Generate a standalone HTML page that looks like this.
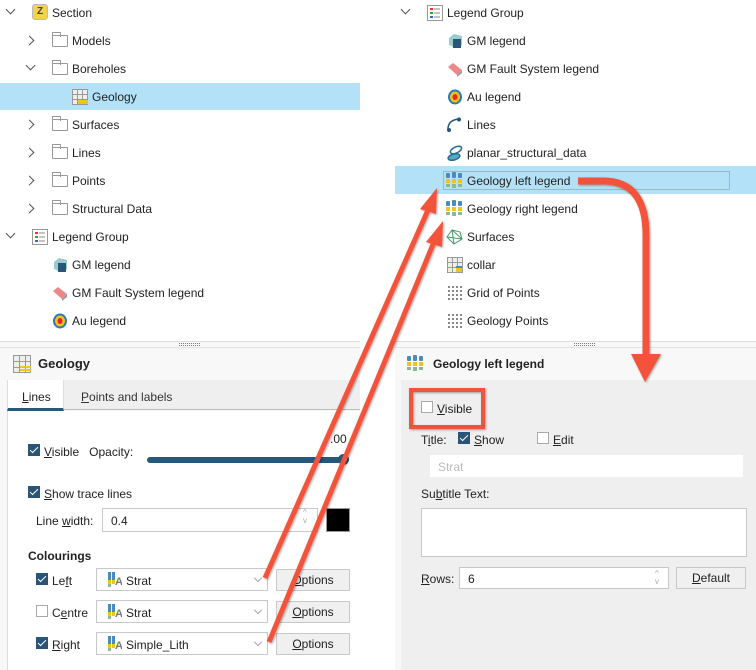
<!DOCTYPE html>
<html><head><meta charset="utf-8"><style>
*{margin:0;padding:0;box-sizing:border-box}
body{width:756px;height:670px;overflow:hidden;background:#fff;position:relative;font-family:"Liberation Sans",sans-serif;font-size:12px;color:#222}
.a{position:absolute}
.t{position:absolute;line-height:16px;white-space:nowrap;margin-top:1px}
.chev{position:absolute;width:7px;height:7px;border-right:1.3px solid #555;border-bottom:1.3px solid #555}
.cr{transform:rotate(-45deg)}
.cd{transform:rotate(45deg)}
.fold{position:absolute;width:16px;height:12px;border:1px solid #999;border-radius:1px;background:#fff}
.fold:before{content:"";position:absolute;left:-1px;top:-4px;width:7px;height:4px;border:1px solid #999;border-bottom:none;border-radius:1px 1px 0 0}
.cb{position:absolute;width:12px;height:12px;border:1px solid #aaa;background:#fff}
.cb.on{background:#2a5578;border-color:#2a5578}
.cb.on:after{content:"";position:absolute;left:3px;top:0px;width:3px;height:7px;border-right:1.5px solid #fff;border-bottom:1.5px solid #fff;transform:rotate(45deg)}
.inp{position:absolute;background:#fff;border:1px solid #c8c8c8}
.btn{position:absolute;background:#f0f0f0;border:1px solid #c8c8c8;text-align:center;line-height:20px}
u{text-decoration:underline}
</style></head><body>

<!-- LEFT TREE -->
<div class="a" style="left:0;top:83px;width:360px;height:27px;background:#b3e1f7"></div>
<div class="chev cd" style="left:7px;top:6px"></div>
<div class="a" style="left:32px;top:4px;width:16px;height:16px;background:#f3d34a;border:1px solid #bbb;border-radius:3px;font-size:10px;font-weight:bold;text-align:center;line-height:14px;color:#444">Z</div>
<div class="t" style="left:52px;top:4px">Section</div>
<div class="chev cr" style="left:26px;top:37px"></div><div class="fold" style="left:52px;top:35px"></div><div class="t" style="left:72px;top:32px">Models</div>
<div class="chev cd" style="left:27px;top:62px"></div><div class="fold" style="left:52px;top:63px"></div><div class="t" style="left:72px;top:60px">Boreholes</div>
<svg class="a" style="left:72px;top:89px" width="16" height="16"><rect x=".5" y=".5" width="15" height="15" fill="#eee" stroke="#999"/><path d="M0 5.5H16M0 10.5H16M5.5 0V16M10.5 0V16" stroke="#999"/><rect x="6" y="11" width="10" height="4" fill="#f0c419"/></svg>
<div class="t" style="left:92px;top:88px">Geology</div>
<div class="chev cr" style="left:26px;top:121px"></div><div class="fold" style="left:52px;top:119px"></div><div class="t" style="left:72px;top:116px">Surfaces</div>
<div class="chev cr" style="left:26px;top:149px"></div><div class="fold" style="left:52px;top:147px"></div><div class="t" style="left:72px;top:144px">Lines</div>
<div class="chev cr" style="left:26px;top:177px"></div><div class="fold" style="left:52px;top:175px"></div><div class="t" style="left:72px;top:172px">Points</div>
<div class="chev cr" style="left:26px;top:205px"></div><div class="fold" style="left:52px;top:203px"></div><div class="t" style="left:72px;top:200px">Structural Data</div>
<div class="chev cd" style="left:7px;top:230px"></div>
<svg class="a" style="left:32px;top:229px" width="16" height="16"><rect x=".5" y=".5" width="15" height="15" fill="#fff" stroke="#999"/><rect x="3" y="3" width="3" height="2" fill="#e33"/><rect x="3" y="7" width="3" height="2" fill="#3a3"/><rect x="3" y="11" width="3" height="2" fill="#36c"/><path d="M7 4H13M7 8H13M7 12H13" stroke="#888"/></svg>
<div class="t" style="left:52px;top:228px">Legend Group</div>
<svg class="a" style="left:52px;top:257px" width="16" height="16"><path d="M2 5L7 1L15 3L15 12L9 15L2 12Z" fill="#9cc"/><rect x="6" y="6" width="8" height="9" fill="#2a5578"/></svg>
<div class="t" style="left:72px;top:256px">GM legend</div>
<svg class="a" style="left:52px;top:285px" width="16" height="16"><path d="M1 6L6 2L15 9L10 14Z" fill="#e88"/><path d="M10 14L15 9L15 12L10 16Z" fill="#999"/></svg>
<div class="t" style="left:72px;top:284px">GM Fault System legend</div>
<svg class="a" style="left:52px;top:313px" width="16" height="16"><ellipse cx="8" cy="8" rx="7" ry="7.5" fill="#2a7ab8"/><ellipse cx="8" cy="8" rx="5" ry="5.5" fill="#f0c419"/><ellipse cx="8" cy="8" rx="2.5" ry="3" fill="#e22"/></svg>
<div class="t" style="left:72px;top:312px">Au legend</div>

<!-- RIGHT TREE -->
<div class="a" style="left:395px;top:166px;width:361px;height:28px;background:#b3e1f7"></div>
<div class="a" style="left:443px;top:171px;width:287px;height:19px;border:1px solid #9bb"></div>
<div class="chev cd" style="left:402px;top:6px"></div>
<svg class="a" style="left:427px;top:5px" width="16" height="16"><rect x=".5" y=".5" width="15" height="15" fill="#fff" stroke="#999"/><rect x="3" y="3" width="3" height="2" fill="#e33"/><rect x="3" y="7" width="3" height="2" fill="#3a3"/><rect x="3" y="11" width="3" height="2" fill="#36c"/><path d="M7 4H13M7 8H13M7 12H13" stroke="#888"/></svg>
<div class="t" style="left:447px;top:4px">Legend Group</div>
<svg class="a" style="left:447px;top:33px" width="16" height="16"><path d="M2 5L7 1L15 3L15 12L9 15L2 12Z" fill="#9cc"/><rect x="6" y="6" width="8" height="9" fill="#2a5578"/></svg>
<div class="t" style="left:467px;top:32px">GM legend</div>
<svg class="a" style="left:447px;top:61px" width="16" height="16"><path d="M1 6L6 2L15 9L10 14Z" fill="#e88"/><path d="M10 14L15 9L15 12L10 16Z" fill="#999"/></svg>
<div class="t" style="left:467px;top:60px">GM Fault System legend</div>
<svg class="a" style="left:447px;top:89px" width="16" height="16"><ellipse cx="8" cy="8" rx="7" ry="7.5" fill="#2a7ab8"/><ellipse cx="8" cy="8" rx="5" ry="5.5" fill="#f0c419"/><ellipse cx="8" cy="8" rx="2.5" ry="3" fill="#e22"/></svg>
<div class="t" style="left:467px;top:88px">Au legend</div>
<svg class="a" style="left:446px;top:117px" width="16" height="16"><path d="M2 12Q2 3 13 2" fill="none" stroke="#2a5578" stroke-width="1.5"/><circle cx="13" cy="2.5" r="2" fill="#2a5578"/><circle cx="3" cy="13" r="2" fill="#2a5578"/></svg>
<div class="t" style="left:467px;top:116px">Lines</div>
<svg class="a" style="left:447px;top:145px" width="16" height="16"><ellipse cx="9" cy="5" rx="6" ry="3" transform="rotate(-25 9 5)" fill="#fff" stroke="#2a6a9a" stroke-width="1.5"/><ellipse cx="7" cy="12" rx="6" ry="3" transform="rotate(-15 7 12)" fill="#5ab" stroke="#2a6a9a" stroke-width="1.5"/></svg>
<div class="t" style="left:467px;top:144px">planar_structural_data</div>
<svg class="a" style="left:446px;top:172px" width="17" height="17"><rect x="0" y="1" width="4" height="5" rx="1" fill="#4a8ac0"/><rect x="6" y="0" width="4" height="6" rx="1" fill="#4a8ac0"/><rect x="12" y="1" width="4" height="5" rx="1" fill="#4a8ac0"/><rect x="0" y="7" width="4" height="4" fill="#f0c419"/><rect x="6" y="7" width="4" height="4" fill="#f0c419"/><rect x="12" y="7" width="4" height="4" fill="#f0c419"/><rect x="0" y="12" width="4" height="3" fill="#8cb89a"/><rect x="6" y="12" width="4" height="4" fill="#8cb89a"/><rect x="12" y="12" width="4" height="3" fill="#8cb89a"/></svg>
<div class="t" style="left:467px;top:172px">Geology left legend</div>
<svg class="a" style="left:446px;top:200px" width="17" height="17"><rect x="0" y="1" width="4" height="5" rx="1" fill="#4a8ac0"/><rect x="6" y="0" width="4" height="6" rx="1" fill="#4a8ac0"/><rect x="12" y="1" width="4" height="5" rx="1" fill="#4a8ac0"/><rect x="0" y="7" width="4" height="4" fill="#f0c419"/><rect x="6" y="7" width="4" height="4" fill="#f0c419"/><rect x="12" y="7" width="4" height="4" fill="#f0c419"/><rect x="0" y="12" width="4" height="3" fill="#8cb89a"/><rect x="6" y="12" width="4" height="4" fill="#8cb89a"/><rect x="12" y="12" width="4" height="3" fill="#8cb89a"/></svg>
<div class="t" style="left:467px;top:200px">Geology right legend</div>
<svg class="a" style="left:446px;top:228px" width="17" height="17"><path d="M1 9L6 2L14 4L16 11L8 16Z M6 2L8 16 M1 9L16 11 M6 2L16 11" fill="none" stroke="#4a9a6a" stroke-width="1"/></svg>
<div class="t" style="left:467px;top:228px">Surfaces</div>
<svg class="a" style="left:447px;top:257px" width="16" height="16"><rect x=".5" y=".5" width="15" height="15" fill="#eee" stroke="#999"/><path d="M0 5.5H16M0 10.5H16M5.5 0V16M10.5 0V16" stroke="#999"/><rect x="9" y="11" width="6" height="4" fill="#f0c419"/><rect x="9" y="9" width="6" height="2" fill="#4a8ac0"/></svg>
<div class="t" style="left:467px;top:256px">collar</div>
<svg class="a" style="left:447px;top:285px" width="16" height="16"><g fill="#888"><rect x="1" y="1" width="2" height="2"/><rect x="5" y="1" width="2" height="2"/><rect x="9" y="1" width="2" height="2"/><rect x="13" y="1" width="2" height="2"/><rect x="1" y="5" width="2" height="2"/><rect x="5" y="5" width="2" height="2"/><rect x="9" y="5" width="2" height="2"/><rect x="13" y="5" width="2" height="2"/><rect x="1" y="9" width="2" height="2"/><rect x="5" y="9" width="2" height="2"/><rect x="9" y="9" width="2" height="2"/><rect x="13" y="9" width="2" height="2"/><rect x="1" y="13" width="2" height="2"/><rect x="5" y="13" width="2" height="2"/><rect x="9" y="13" width="2" height="2"/><rect x="13" y="13" width="2" height="2"/></g></svg>
<div class="t" style="left:467px;top:284px">Grid of Points</div>
<svg class="a" style="left:447px;top:313px" width="16" height="16"><g fill="#888"><rect x="1" y="1" width="2" height="2"/><rect x="5" y="1" width="2" height="2"/><rect x="9" y="1" width="2" height="2"/><rect x="13" y="1" width="2" height="2"/><rect x="1" y="5" width="2" height="2"/><rect x="5" y="5" width="2" height="2"/><rect x="9" y="5" width="2" height="2"/><rect x="13" y="5" width="2" height="2"/><rect x="1" y="9" width="2" height="2"/><rect x="5" y="9" width="2" height="2"/><rect x="9" y="9" width="2" height="2"/><rect x="13" y="9" width="2" height="2"/><rect x="1" y="13" width="2" height="2"/><rect x="5" y="13" width="2" height="2"/><rect x="9" y="13" width="2" height="2"/><rect x="13" y="13" width="2" height="2"/></g></svg>
<div class="t" style="left:467px;top:312px">Geology Points</div>

<!-- LEFT BOTTOM PANEL -->
<div class="a" style="left:0;top:341px;width:360px;height:329px;background:#f8f8f8;border-top:1px solid #ddd"></div>
<div class="a" style="left:0;top:347px;width:360px;height:1px;background:#e2e2e2"></div>
<div class="a" style="left:179px;top:343px;width:21px;height:3px;border-top:1px dotted #777;border-bottom:1px dotted #777"></div>
<svg class="a" style="left:13px;top:355px" width="18" height="18"><rect x=".5" y=".5" width="17" height="17" fill="#eee" stroke="#999"/><path d="M0 6.5H18M0 12.5H18M6.5 0V18M12.5 0V18" stroke="#999"/><rect x="7" y="11" width="11" height="2" fill="#f0c419"/><rect x="7" y="14" width="11" height="2" fill="#f0c419"/></svg>
<div class="t" style="left:38px;top:355px;font-weight:bold;font-size:13px">Geology</div>
<div class="a" style="left:7px;top:380px;width:353px;height:30px;background:#efefef;border-bottom:1px solid #bbb"></div>
<div class="a" style="left:7px;top:380px;width:57px;height:31px;background:#fff;border-bottom:3px solid #25587a;border-left:1px solid #ddd;border-right:1px solid #ddd"></div>
<div class="t" style="left:22px;top:388px"><u>L</u>ines</div>
<div class="t" style="left:81px;top:388px;color:#333"><u>P</u>oints and labels</div>
<div class="a" style="left:7px;top:411px;width:353px;height:259px;background:#fff;border-left:1px solid #ddd"></div>
<div class="cb on" style="left:28px;top:444px"></div>
<div class="t" style="left:44px;top:443px"><u>V</u>isible &nbsp; Opacity:</div>
<div class="t" style="left:330px;top:430px">.00</div>
<div class="a" style="left:147px;top:457px;width:200px;height:6px;background:#25587a;border-radius:3px"></div>
<div class="a" style="left:338px;top:454px;width:11px;height:11px;background:#25587a;border-radius:50%"></div>
<div class="cb on" style="left:28px;top:486px"></div>
<div class="t" style="left:44px;top:485px"><u>S</u>how trace lines</div>
<div class="t" style="left:36px;top:512px">Line <u>w</u>idth:</div>
<div class="inp" style="left:102px;top:508px;width:216px;height:24px"></div>
<div class="t" style="left:111px;top:512px">0.4</div>
<div class="t" style="left:303px;top:508px;font-size:8px;color:#aaa;line-height:8px">^<br>v</div>
<div class="a" style="left:326px;top:508px;width:24px;height:24px;background:#000;border:1px solid #999"></div>
<div class="t" style="left:28px;top:547px;font-weight:bold">Colourings</div>
<div class="cb on" style="left:36px;top:573px"></div><div class="t" style="left:52px;top:572px">Le<u>f</u>t</div>
<div class="cb" style="left:36px;top:605px"></div><div class="t" style="left:52px;top:604px">C<u>e</u>ntre</div>
<div class="cb on" style="left:36px;top:637px"></div><div class="t" style="left:52px;top:636px"><u>R</u>ight</div>
<div class="inp" style="left:96px;top:568px;width:172px;height:23px"></div>
<div class="inp" style="left:96px;top:600px;width:172px;height:23px"></div>
<div class="inp" style="left:96px;top:632px;width:172px;height:23px"></div>
<svg class="a" style="left:108px;top:572px" width="14" height="16"><rect x="0" y="0" width="3" height="8" fill="#4a8ac0"/><rect x="0" y="8" width="3" height="4" fill="#f0c419"/><rect x="0" y="12" width="3" height="3" fill="#8cb89a"/><rect x="4" y="0" width="3" height="8" fill="#4a8ac0"/><rect x="4" y="8" width="3" height="4" fill="#f0c419"/><text x="7" y="13" font-size="11" font-family="Liberation Sans" fill="#777" font-weight="bold">A</text></svg>
<div class="t" style="left:126px;top:572px">Strat</div>
<svg class="a" style="left:108px;top:604px" width="14" height="16"><rect x="0" y="0" width="3" height="8" fill="#4a8ac0"/><rect x="0" y="8" width="3" height="4" fill="#f0c419"/><rect x="0" y="12" width="3" height="3" fill="#8cb89a"/><rect x="4" y="0" width="3" height="8" fill="#4a8ac0"/><rect x="4" y="8" width="3" height="4" fill="#f0c419"/><text x="7" y="13" font-size="11" font-family="Liberation Sans" fill="#777" font-weight="bold">A</text></svg>
<div class="t" style="left:126px;top:604px">Strat</div>
<svg class="a" style="left:108px;top:636px" width="14" height="16"><rect x="0" y="0" width="3" height="8" fill="#4a8ac0"/><rect x="0" y="8" width="3" height="4" fill="#f0c419"/><rect x="0" y="12" width="3" height="3" fill="#8cb89a"/><rect x="4" y="0" width="3" height="8" fill="#4a8ac0"/><rect x="4" y="8" width="3" height="4" fill="#f0c419"/><text x="7" y="13" font-size="11" font-family="Liberation Sans" fill="#777" font-weight="bold">A</text></svg>
<div class="t" style="left:126px;top:636px">Simple_Lith</div>
<div class="chev cd" style="left:255px;top:575px;border-color:#aaa;width:6px;height:6px"></div>
<div class="chev cd" style="left:255px;top:607px;border-color:#aaa;width:6px;height:6px"></div>
<div class="chev cd" style="left:255px;top:639px;border-color:#aaa;width:6px;height:6px"></div>
<div class="btn" style="left:276px;top:569px;width:74px;height:22px"><u>O</u>ptions</div>
<div class="btn" style="left:276px;top:601px;width:74px;height:22px"><u>O</u>ptions</div>
<div class="btn" style="left:276px;top:633px;width:74px;height:22px"><u>O</u>ptions</div>

<!-- RIGHT BOTTOM PANEL -->
<div class="a" style="left:395px;top:341px;width:361px;height:329px;background:#f8f8f8;border-top:1px solid #ddd"></div>
<div class="a" style="left:395px;top:347px;width:361px;height:1px;background:#e2e2e2"></div>
<div class="a" style="left:574px;top:343px;width:21px;height:3px;border-top:1px dotted #777;border-bottom:1px dotted #777"></div>
<svg class="a" style="left:407px;top:355px" width="17" height="17"><rect x="0" y="1" width="4" height="5" rx="1" fill="#4a8ac0"/><rect x="6" y="0" width="4" height="6" rx="1" fill="#4a8ac0"/><rect x="12" y="1" width="4" height="5" rx="1" fill="#4a8ac0"/><rect x="0" y="7" width="4" height="4" fill="#f0c419"/><rect x="6" y="7" width="4" height="4" fill="#f0c419"/><rect x="12" y="7" width="4" height="4" fill="#f0c419"/><rect x="0" y="12" width="4" height="3" fill="#8cb89a"/><rect x="6" y="12" width="4" height="4" fill="#8cb89a"/><rect x="12" y="12" width="4" height="3" fill="#8cb89a"/></svg>
<div class="t" style="left:433px;top:355px;font-weight:bold">Geology left legend</div>
<div class="a" style="left:401px;top:380px;width:355px;height:290px;background:#efefef"></div>
<div class="cb" style="left:421px;top:401px"></div>
<div class="t" style="left:437px;top:400px"><u>V</u>isible</div>
<div class="t" style="left:421px;top:431px">T<u>i</u>tle:</div>
<div class="cb on" style="left:458px;top:432px"></div><div class="t" style="left:474px;top:431px"><u>S</u>how</div>
<div class="cb" style="left:537px;top:432px"></div><div class="t" style="left:553px;top:431px"><u>E</u>dit</div>
<div class="a" style="left:430px;top:455px;width:313px;height:22px;background:#fff"></div>
<div class="t" style="left:438px;top:458px;color:#bbb">Strat</div>
<div class="t" style="left:421px;top:485px">Su<u>b</u>title Text:</div>
<div class="inp" style="left:421px;top:508px;width:326px;height:49px"></div>
<div class="t" style="left:421px;top:570px"><u>R</u>ows:</div>
<div class="inp" style="left:459px;top:567px;width:210px;height:22px"></div>
<div class="t" style="left:468px;top:570px">6</div>
<div class="t" style="left:655px;top:569px;font-size:8px;color:#aaa;line-height:8px">^<br>v</div>
<div class="btn" style="left:676px;top:567px;width:70px;height:22px"><u>D</u>efault</div>

<!-- ANNOTATIONS -->
<svg class="a" style="left:0;top:0" width="756" height="670">
<defs><filter id="s"><feDropShadow dx="1" dy="1" stdDeviation="1" flood-opacity=".35"/></filter></defs>
<g fill="#f4533a" stroke="#f4533a" filter="url(#s)">
<rect x="411" y="390" width="72" height="37" fill="none" stroke-width="4"/>
<line x1="265" y1="578" x2="428" y2="210" stroke-width="5"/>
<polygon points="437,188 420,209 436,214" stroke="none"/>
<line x1="269" y1="642" x2="434" y2="242" stroke-width="5"/>
<polygon points="443,221 426,242 442,247" stroke="none"/>
<path d="M578 181 L603 181 Q646 181 646 235 L646 355" fill="none" stroke-width="7"/>
<polygon points="631,354 661,354 645,382" stroke="none"/>
</g>
</svg>
</body></html>
